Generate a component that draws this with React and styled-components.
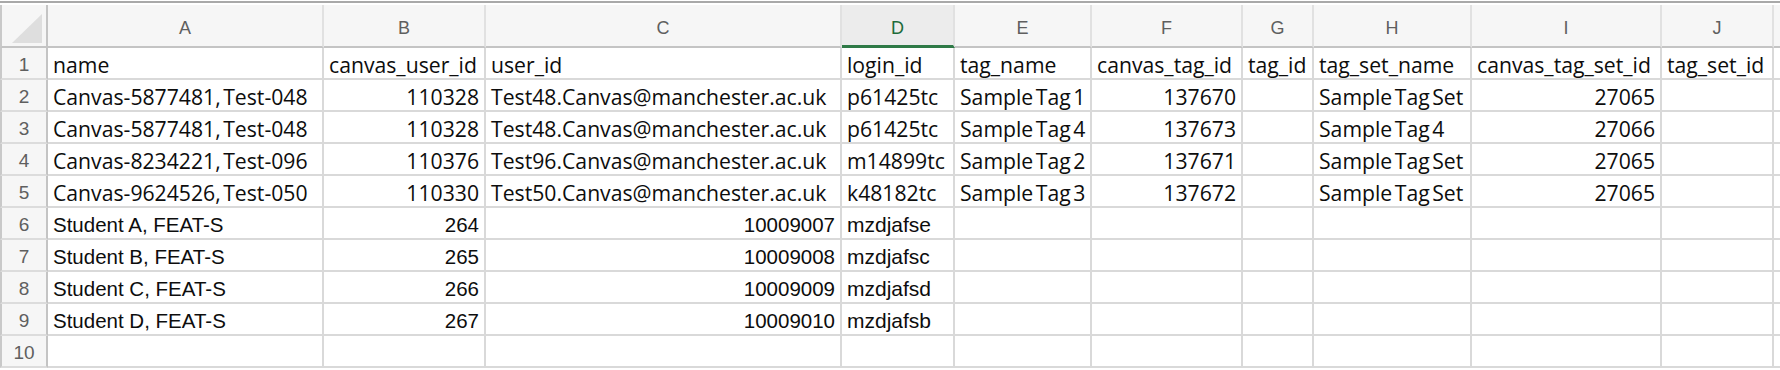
import React from "react";
import styled, { createGlobalStyle, css } from "styled-components";

const GlobalStyle = createGlobalStyle`
  html, body {
    margin: 0;
    padding: 0;
    background: #ffffff;
  }
  body {
    font-family: "Open Sans", "Liberation Sans", Arial, sans-serif;
    -webkit-font-smoothing: antialiased;
  }
`;

const COLUMNS = [
  { letter: "A", width: 276 },
  { letter: "B", width: 162 },
  { letter: "C", width: 356 },
  { letter: "D", width: 113, active: true },
  { letter: "E", width: 137 },
  { letter: "F", width: 151 },
  { letter: "G", width: 71 },
  { letter: "H", width: 158 },
  { letter: "I", width: 190 },
  { letter: "J", width: 112 },
  { letter: "", width: null },
];

const HEADER_WIDTH = 48;

// Cell kinds: text is left-aligned, num is right-aligned.
const t = (v, face) => ({ v, align: "left", face });
const n = (v, face) => ({ v, align: "right", face });
const e = () => ({ v: "", align: "left" });

const ROWS = [
  [
    t("name"), t("canvas_user_id"), t("user_id"), t("login_id"), t("tag_name"),
    t("canvas_tag_id"), t("tag_id"), t("tag_set_name"), t("canvas_tag_set_id"), t("tag_set_id"), e(),
  ],
  [
    t("Canvas-5877481, Test-048"), n("110328"), t("Test48.Canvas@manchester.ac.uk"), t("p61425tc"),
    t("Sample Tag 1"), n("137670"), e(), t("Sample Tag Set"), n("27065"), e(), e(),
  ],
  [
    t("Canvas-5877481, Test-048"), n("110328"), t("Test48.Canvas@manchester.ac.uk"), t("p61425tc"),
    t("Sample Tag 4"), n("137673"), e(), t("Sample Tag 4"), n("27066"), e(), e(),
  ],
  [
    t("Canvas-8234221, Test-096"), n("110376"), t("Test96.Canvas@manchester.ac.uk"), t("m14899tc"),
    t("Sample Tag 2"), n("137671"), e(), t("Sample Tag Set"), n("27065"), e(), e(),
  ],
  [
    t("Canvas-9624526, Test-050"), n("110330"), t("Test50.Canvas@manchester.ac.uk"), t("k48182tc"),
    t("Sample Tag 3"), n("137672"), e(), t("Sample Tag Set"), n("27065"), e(), e(),
  ],
  ...["A", "B", "C", "D"].map((s, i) => [
    t(`Student ${s}, FEAT-S`, "arial"), n(String(264 + i), "arial"), n(String(10009007 + i), "arial"),
    t(["mzdjafse", "mzdjafsc", "mzdjafsd", "mzdjafsb"][i], "login"),
    e(), e(), e(), e(), e(), e(), e(),
  ]),
  COLUMNS.map(() => e()),
];

const Frame = styled.div`
  width: 1780px;
  height: 370px;
  overflow: hidden;
  background: #ffffff;
  padding-top: 1px;
  box-sizing: border-box;
`;

const WindowEdge = styled.div`
  height: 2px;
  background: #a9a9a9;
  margin-bottom: 2px;
`;

const Sheet = styled.div`
  display: grid;
  grid-template-columns: ${HEADER_WIDTH}px ${COLUMNS.map((c) => (c.width ? `${c.width}px` : "1fr")).join(" ")};
  grid-auto-rows: 32px;
  grid-template-rows: 43px;
`;

const headerBase = css`
  box-sizing: border-box;
  background: #f6f6f6;
  color: #5f5f5f;
  font-family: "Liberation Sans", Arial, sans-serif;
  display: flex;
  justify-content: center;
`;

const Corner = styled.div`
  ${headerBase};
  position: relative;
  border-left: 2px solid #c9c9c9;
  border-right: 2px solid #c4c4c4;
  border-bottom: 2px solid #c4c4c4;
`;

const CornerMark = styled.span`
  position: absolute;
  right: 4px;
  bottom: 3px;
  width: 0;
  height: 0;
  border-style: solid;
  border-width: 0 0 29px 30px;
  border-color: transparent transparent #dedede transparent;
`;

const ColHeader = styled.div`
  ${headerBase};
  align-items: center;
  font-size: 18px;
  padding-top: 5px;
  border-right: 2px solid #e1e1e1;
  border-bottom: 2px solid #c4c4c4;

  ${({ $active }) =>
    $active &&
    css`
      background: #ececec;
      color: #1d6b3a;
      border-bottom: 3px solid #2f7a47;
      padding-top: 6px;
    `}
`;

const RowHeader = styled.div`
  ${headerBase};
  align-items: flex-end;
  font-size: 19px;
  line-height: 24px;
  padding-bottom: 1px;
  border-left: 2px solid #c9c9c9;
  border-right: 2px solid #c4c4c4;
  border-bottom: 2px solid #dcdcdc;
`;

const faces = {
  body: css`
    font-family: "Open Sans", "Liberation Sans", sans-serif;
    font-size: 21.2px;
    word-spacing: -3px;
  `,
  arial: css`
    font-family: "Liberation Sans", Arial, sans-serif;
    font-size: 20.5px;
  `,
  login: css`
    font-family: "Liberation Sans", Arial, sans-serif;
    font-size: 21px;
  `,
};

const Cell = styled.div`
  box-sizing: border-box;
  display: flex;
  align-items: flex-end;
  justify-content: ${({ $align }) => ($align === "right" ? "flex-end" : "flex-start")};
  padding: 0 5px 1px 5px;
  line-height: 24px;
  color: #0d0d0d;
  white-space: nowrap;
  overflow: hidden;
  border-right: 2px solid #d9d9d9;
  border-bottom: 2px solid #d9d9d9;
  ${({ $face }) => faces[$face || "body"]};
`;

export default function App() {
  return (
    <>
      <GlobalStyle />
      <Frame>
        <WindowEdge />
        <Sheet>
          <Corner>
            <CornerMark />
          </Corner>
          {COLUMNS.map((c, i) => (
            <ColHeader key={`h${i}`} $active={c.active}>
              {c.letter}
            </ColHeader>
          ))}
          {ROWS.map((row, r) => (
            <React.Fragment key={`r${r}`}>
              <RowHeader>{r + 1}</RowHeader>
              {row.map((cell, c) => (
                <Cell key={`c${r}-${c}`} $align={cell.align} $face={cell.face}>
                  {cell.v}
                </Cell>
              ))}
            </React.Fragment>
          ))}
        </Sheet>
      </Frame>
    </>
  );
}
